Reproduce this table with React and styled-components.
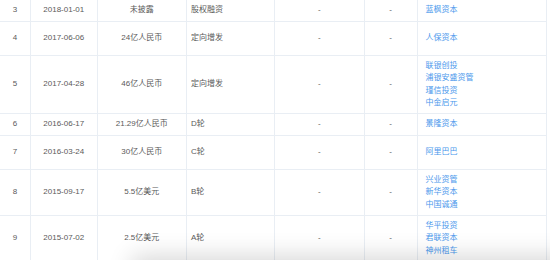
import React from "react";
import styled, { createGlobalStyle } from "styled-components";

const Global = createGlobalStyle`
  html, body { margin: 0; padding: 0; background: #fff; }
  body { font-family: "Liberation Sans", "Noto Sans CJK SC", sans-serif; overflow: hidden; }
`;

const Page = styled.div`
  position: relative;
  width: 550px;
  height: 260px;
  overflow: hidden;
  background: #fff;
`;

const Table = styled.div`
  display: flex;
  flex-direction: column;
  width: 547px;
`;

const Row = styled.div`
  display: grid;
  grid-template-columns: 31px 66.5px 89.5px 88px 89.5px 53px 129.5px;
  height: ${(p) => p.$h}px;
  border-bottom: 1px solid #e9eef4;
  box-sizing: border-box;
`;

const Cell = styled.div`
  display: flex;
  flex-direction: column;
  justify-content: center;
  align-items: ${(p) => (p.$left ? "flex-start" : "center")};
  padding-left: ${(p) => p.$pl || 0}px;
  border-right: 1px solid #e9eef4;
  font-size: 8px;
  line-height: 12.3px;
  color: #5a5a5a;
  white-space: nowrap;
  overflow: hidden;
`;

const Investor = styled.a`
  color: #4b98ec;
  text-decoration: none;
  font-size: 8px;
  line-height: 12.3px;
`;

const Shadow = styled.div`
  position: absolute;
  left: 140px;
  right: -40px;
  top: 264px;
  height: 40px;
  box-shadow: 0 0 24px 8px rgba(0, 0, 0, 0.16);
  background: #fff;
  pointer-events: none;
`;

const rows = [
  { n: 3, d: "2018-01-01", a: "未披露", r: "股权融资", inv: ["蓝枫资本"], h: 22 },
  { n: 4, d: "2017-06-06", a: "24亿人民币", r: "定向增发", inv: ["人保资本"], h: 34 },
  { n: 5, d: "2017-04-28", a: "46亿人民币", r: "定向增发", inv: ["联银创投", "浦银安盛资管", "瑾信投资", "中金启元"], h: 58 },
  { n: 6, d: "2016-06-17", a: "21.29亿人民币", r: "D轮", inv: ["景隆资本"], h: 22 },
  { n: 7, d: "2016-03-24", a: "30亿人民币", r: "C轮", inv: ["阿里巴巴"], h: 34 },
  { n: 8, d: "2015-09-17", a: "5.5亿美元", r: "B轮", inv: ["兴业资管", "新华资本", "中国诚通"], h: 46 },
  { n: 9, d: "2015-07-02", a: "2.5亿美元", r: "A轮", inv: ["华平投资", "君联资本", "神州租车"], h: 46 },
];

export default function App() {
  return (
    <Page>
      <Global />
      <Table>
        {rows.map((r) => (
          <Row key={r.n} $h={r.h}>
            <Cell>{r.n}</Cell>
            <Cell>{r.d}</Cell>
            <Cell>{r.a}</Cell>
            <Cell $left $pl={4}>{r.r}</Cell>
            <Cell>-</Cell>
            <Cell>-</Cell>
            <Cell $left $pl={8}>
              {r.inv.map((i) => (
                <Investor key={i} href="#">{i}</Investor>
              ))}
            </Cell>
          </Row>
        ))}
      </Table>
      <Shadow />
    </Page>
  );
}
